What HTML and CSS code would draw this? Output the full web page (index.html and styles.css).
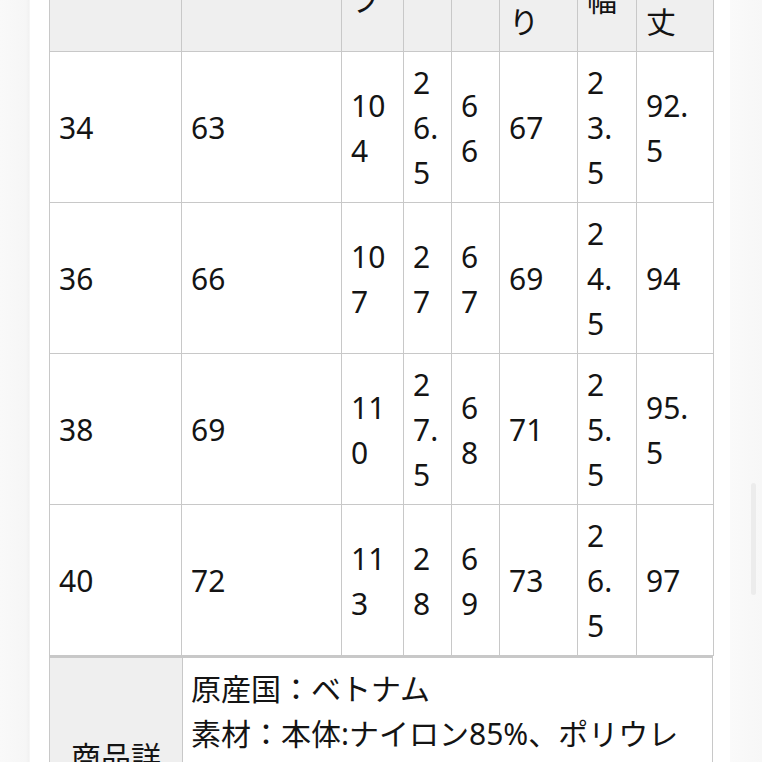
FILE: index.html
```html
<!DOCTYPE html>
<html lang="ja">
<head>
<meta charset="utf-8">
<title>サイズ表</title>
<link rel="stylesheet" href="styles.css">
</head>
<body>
<div class="gutter gutter-left"></div>
<main class="panel">
  <div class="scroll">
    <table class="size-table">
      <colgroup>
        <col class="w-size"><col class="w-waist"><col class="w-hip"><col class="w-rise">
        <col class="w-inseam"><col class="w-thigh"><col class="w-hem"><col class="w-length">
      </colgroup>
      <thead>
        <tr>
          <th>サイズ</th>
          <th>ウエスト</th>
          <th>ヒッ<br>プ</th>
          <th>股</th>
          <th>裄</th>
          <th>太も<br>も周<br>り</th>
          <th>裾<br>幅</th>
          <th>パン<br>ツ総<br>丈</th>
        </tr>
      </thead>
      <tbody>
        <tr><td>34</td><td>63</td><td>104</td><td>26.5</td><td>66</td><td>67</td><td class="hem">23.5</td><td class="len">92.5</td></tr>
        <tr><td>36</td><td>66</td><td>107</td><td>27</td><td>67</td><td>69</td><td class="hem">24.5</td><td class="len">94</td></tr>
        <tr><td>38</td><td>69</td><td>110</td><td>27.5</td><td>68</td><td>71</td><td class="hem">25.5</td><td class="len">95.5</td></tr>
        <tr><td>40</td><td>72</td><td>113</td><td>28</td><td>69</td><td>73</td><td class="hem">26.5</td><td class="len">97</td></tr>
      </tbody>
    </table>
    <table class="detail-table">
      <tr>
        <th>商品詳細</th>
        <td>原産国：ベトナム<br>素材：本体:ナイロン85%、ポリウレタン15%<br>裏地：ポリエステル100%<br>洗濯：手洗い</td>
      </tr>
    </table>
  </div>
</main>
<div class="gutter gutter-right"><div class="thumb"></div></div>
</body>
</html>
```

FILE: styles.css
```css
html, body {
  margin: 0;
  padding: 0;
  height: 100%;
  overflow: hidden;
}
body {
  display: flex;
  background: #f8f8f8;
  font-family: "Noto Sans", "Noto Sans CJK JP", sans-serif;
  color: #141414;
}
.gutter {
  flex: none;
  height: 762px;
}
.gutter-left {
  width: 30px;
  background: linear-gradient(to right, #f9f9f9 0, #f6f6f6 26px, #f1f1f1 29px, #fbfbfb 30px);
}
.gutter-right {
  width: 32px;
  position: relative;
  background: linear-gradient(to right, #fafafa 0, #f7f7f7 100%);
}
.thumb {
  position: absolute;
  left: 21px;
  top: 483px;
  width: 5px;
  height: 112px;
  border-radius: 3px;
  background: #ececec;
}
.panel {
  flex: none;
  width: 700px;
  height: 762px;
  background: #ffffff;
  padding: 0 17px 0 19px;
  box-sizing: border-box;
  overflow: hidden;
}
.scroll {
  margin-top: -100px;
}
table {
  border-collapse: collapse;
  table-layout: fixed;
  width: 664px;
  font-size: 30px;
  line-height: 45px;
}
th, td {
  border: 1px solid #c8c8c8;
  padding: 8px 8px 7px 9px;
  text-align: left;
  vertical-align: middle;
  font-weight: normal;
  word-break: break-all;
}
th {
  background: #efefef;
}
.size-table th {
  white-space: nowrap;
  overflow: hidden;
}
.w-size { width: 132px; }
.w-waist { width: 160px; }
.w-hip { width: 62px; }
.w-rise { width: 48px; }
.w-inseam { width: 48px; }
.w-thigh { width: 78px; }
.w-hem { width: 59px; }
.w-length { width: 77px; }
.size-table td.hem { padding-right: 17px; }
.size-table td.len { padding-right: 12px; }
.detail-table {
  border-top: 2px solid #c8c8c8;
}
.detail-table th {
  width: 116px;
  padding-left: 8px;
  text-align: center;
}
.detail-table td {
  padding-left: 8px;
}
```
